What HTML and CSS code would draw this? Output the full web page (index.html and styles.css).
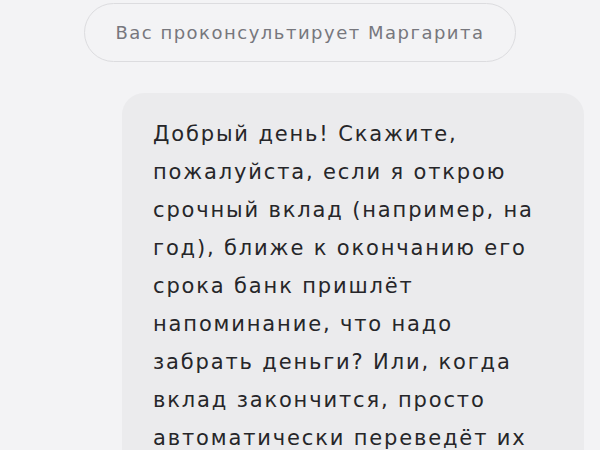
FILE: index.html
```html
<!DOCTYPE html>
<html lang="ru">
<head>
<meta charset="utf-8">
<link rel="stylesheet" href="styles.css">
</head>
<body>
<div class="chat">
  <div class="consultant">Вас проконсультирует Маргарита</div>
  <div class="message">
    <p class="message-text">Добрый день! Скажите, пожалуйста, если я открою срочный вклад (например, на год), ближе к окончанию его срока банк пришлёт напоминание, что надо забрать деньги? Или, когда вклад закончится, просто автоматически переведёт их на карту?</p>
  </div>
</div>
</body>
</html>
```
FILE: styles.css
```css
html, body {
  margin: 0;
  padding: 0;
  background: #f3f3f5;
  height: 100%;
  overflow: hidden;
}
.chat {
  display: flex;
  flex-direction: column;
  padding: 3px 16px 0 16px;
  font-family: "DejaVu Sans", "Noto Sans", sans-serif;
}
.consultant {
  align-self: center;
  width: 432px;
  height: 59px;
  box-sizing: border-box;
  border: 1px solid #dcdcdf;
  border-radius: 30px;
  display: flex;
  align-items: center;
  justify-content: center;
  font-size: 18px;
  letter-spacing: 1.5px;
  color: #77777d;
}
.message {
  align-self: flex-end;
  width: 462px;
  margin-top: 31px;
  box-sizing: border-box;
  background: #ebebed;
  border-radius: 22px;
  padding: 22px 31px 30px 31px;
}
.message-text {
  margin: 0;
  font-size: 21px;
  letter-spacing: 1.85px;
  line-height: 38px;
  color: #262629;
}
```
